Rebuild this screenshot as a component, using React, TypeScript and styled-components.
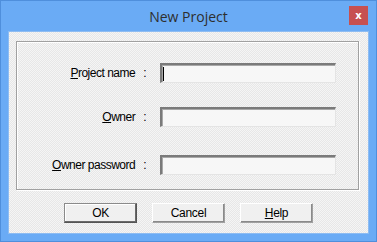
import { Fragment } from 'react';
import styled, { createGlobalStyle } from 'styled-components';

const GlobalStyle = createGlobalStyle`
  html, body {
    margin: 0;
    padding: 0;
    background: #ffffff;
  }
`;

const Window = styled.div`
  box-sizing: border-box;
  width: 377px;
  height: 242px;
  display: flex;
  flex-direction: column;
  background: #6aabf5;
  border: 1px solid #4f8fdc;
`;

const TitleBar = styled.div`
  height: 30px;
  display: flex;
  align-items: center;
  justify-content: center;
  position: relative;
`;

const Title = styled.span`
  font-family: 'Open Sans', 'Liberation Sans', sans-serif;
  font-size: 14px;
  color: #2e2e2e;
  margin-top: 1px;
`;

const CloseButton = styled.div`
  position: absolute;
  right: 8px;
  top: 5px;
  width: 19px;
  height: 19px;
  background: #c75050;
  display: flex;
  align-items: center;
  justify-content: center;
  color: #ffffff;
  font-family: 'DejaVu Sans', sans-serif;
  font-weight: bold;
  font-size: 10px;
`;

const Client = styled.div`
  box-sizing: border-box;
  margin: 0 7px 7px 7px;
  flex: 1;
  display: flex;
  flex-direction: column;
  align-items: center;
  border: 1px solid #8dbcf2;
  background: repeating-conic-gradient(#f5f5f5 0 25%, #e7e7e7 0 50%) 0 0 / 2px 2px;
`;

const GroupBox = styled.div`
  box-sizing: border-box;
  margin: 9px 9px 0 7px;
  align-self: stretch;
  height: 149px;
  border: 1px solid #a0a0a0;
  box-shadow: inset 1px 1px 0 #ffffff, 1px 1px 0 #ffffff;
  padding: 21px 22px 0 0;
  display: grid;
  grid-template-columns: 1fr 176px;
  column-gap: 14px;
  align-content: start;
`;

const Label = styled.label<{ $top: number }>`
  margin-top: ${(p) => p.$top}px;
  height: 20px;
  display: flex;
  align-items: center;
  justify-content: flex-end;
  font-family: 'Liberation Sans', Arial, sans-serif;
  font-size: 12px;
  color: #000000;
  letter-spacing: -0.5px;
`;

const Colon = styled.span`
  margin-left: 8px;
`;

const Key = styled.span`
  text-decoration: underline;
  text-underline-offset: 1px;
`;

const Field = styled.div<{ $top: number }>`
  box-sizing: border-box;
  margin-top: ${(p) => p.$top}px;
  height: 20px;
  background: #f7f7f7;
  border-top: 2px solid #7a7a7a;
  border-left: 2px solid #7a7a7a;
  border-right: 1px solid #e4e4e4;
  border-bottom: 1px solid #e4e4e4;
  box-shadow: inset 1px 1px 0 #a8a8a8;
  display: flex;
  align-items: center;
  padding-left: 1px;
`;

const Caret = styled.span`
  width: 1px;
  height: 14px;
  background: #000000;
`;

const ButtonRow = styled.div`
  margin-top: 13px;
  display: flex;
  gap: 15px;
`;

const Button = styled.button<{ $default?: boolean }>`
  box-sizing: border-box;
  width: 73px;
  height: 20px;
  padding: 0;
  background: #f0f0f0;
  border: 1px solid ${(p) => (p.$default ? '#555555' : '#a0a0a0')};
  border-top-color: ${(p) => (p.$default ? '#8a8a8a' : '#ffffff')};
  border-left-color: ${(p) => (p.$default ? '#8a8a8a' : '#ffffff')};
  box-shadow: ${(p) =>
    p.$default
      ? 'inset -1px -1px 0 #6a6a6a, inset 1px 1px 0 #ffffff'
      : 'inset -1px -1px 0 #8a8a8a'};
  font-family: 'Liberation Sans', Arial, sans-serif;
  font-size: 12px;
  letter-spacing: -0.3px;
  color: #000000;
`;

const rows = [
  { key: 'P', rest: 'roject name', top: 0, caret: true },
  { key: 'O', rest: 'wner', top: 24, caret: false },
  { key: 'O', rest: 'wner password', top: 28, caret: false },
];

export default function App() {
  return (
    <>
      <GlobalStyle />
      <Window>
        <TitleBar>
          <Title>New Project</Title>
          <CloseButton>x</CloseButton>
        </TitleBar>
        <Client>
          <GroupBox>
            {rows.map((r) => (
              <Fragment key={r.rest}>
                <Label $top={r.top}>
                  <Key>{r.key}</Key>
                  {r.rest}
                  <Colon>:</Colon>
                </Label>
                <Field $top={r.top}>{r.caret && <Caret />}</Field>
              </Fragment>
            ))}
          </GroupBox>
          <ButtonRow>
            <Button $default>OK</Button>
            <Button>Cancel</Button>
            <Button>
              <Key>H</Key>elp
            </Button>
          </ButtonRow>
        </Client>
      </Window>
    </>
  );
}
